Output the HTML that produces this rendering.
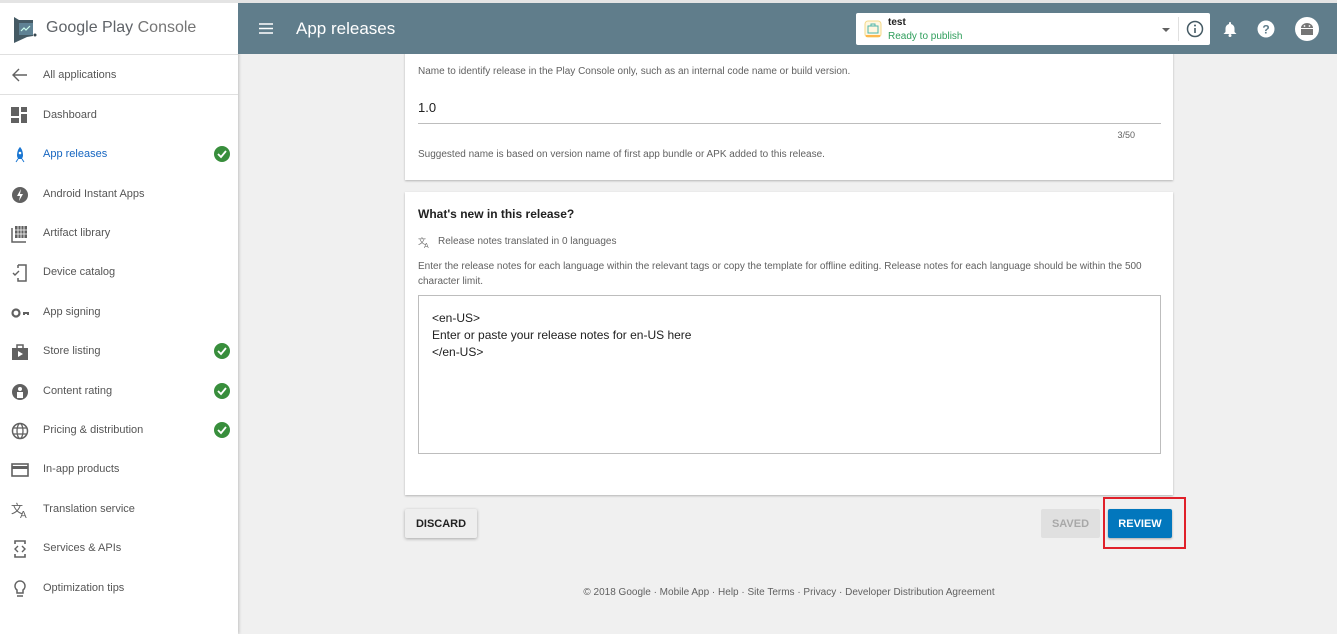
<!DOCTYPE html>
<html><head><meta charset="utf-8"><style>
*{box-sizing:border-box;margin:0;padding:0}
body{width:1337px;height:634px;overflow:hidden;background:#f0f0f0;font-family:"Liberation Sans",Arial,sans-serif;position:relative}
.topline{position:absolute;left:0;top:0;width:1337px;height:3px;background:#e4e4e4;z-index:6}
.side{position:absolute;left:0;top:3px;width:238px;height:631px;background:#fff;box-shadow:1px 0 3px rgba(0,0,0,.2);z-index:4}
.logo{height:52px;border-bottom:1px solid #e0e0e0;position:relative}
.logo span{position:absolute;left:46px;top:16px;font-size:16px;color:#5f6368}
.logo span b{font-weight:normal;color:#757575}
.allapps{height:40px;border-bottom:1px solid #e0e0e0;position:relative;font-size:11px;color:#555}
.nav{position:absolute;left:0;width:238px;height:20px;font-size:11px;color:#555;z-index:5}
.nav .t{position:absolute;left:43px;top:4px}
.nav svg{position:absolute;left:11px;top:2px}
.chk{position:absolute;left:214px;top:2px;width:16px;height:16px;border-radius:50%;background:#388e3c}
.hdr{position:absolute;left:238px;top:3px;width:1099px;height:51px;background:#607d8b;z-index:5}
.hdr .title{position:absolute;left:58px;top:16px;color:#fff;font-size:17px}
.sel{position:absolute;left:618px;top:10px;width:354px;height:32px;background:#fff;border-radius:2px}
.card{position:absolute;left:405px;width:768px;background:#fff;box-shadow:0 1px 2px rgba(0,0,0,.25)}
.s{font-size:10px;color:#616161;position:absolute}
.btn{position:absolute;font-size:11px;font-weight:bold;text-align:center;line-height:30px;border-radius:2px}
</style></head><body>
<div class="topline"></div>
<div class="side">
 <div class="logo">
  <svg style="position:absolute;left:13px;top:13px" width="26" height="28" viewBox="0 0 26 28"><path d="M1 1 L6 4 L20 4 L20 20 L14 21 L1 27 Z" fill="#455a64"/><rect x="6" y="7" width="14" height="12" fill="#5f8294"/><path d="M8 15 l3-3 2 2 4-4" stroke="#cfe" stroke-width="1.2" fill="none"/><circle cx="22" cy="19" r="1.5" fill="#37474f"/></svg>
  <span>Google Play <b>Console</b></span>
 </div>
 <div class="allapps"><svg style="position:absolute;left:12px;top:13px" width="16" height="14" viewBox="0 0 16 14"><path d="M15 7H2M7 1L1 7l6 6" stroke="#616161" stroke-width="1.4" fill="none"/></svg><span style="position:absolute;left:43px;top:14px">All applications</span></div>
</div>
<div class="nav" style="top:105px"><svg width="18" height="16" viewBox="0 0 18 16"><rect x="0" y="0" width="8" height="9" fill="#616161"/><rect x="10" y="0" width="6" height="5" fill="#616161"/><rect x="0" y="11" width="8" height="5" fill="#616161"/><rect x="10" y="7" width="6" height="9" fill="#616161"/></svg><span class="t">Dashboard</span></div>
<div class="nav" style="top:144px;color:#1565c0"><svg width="18" height="18" viewBox="0 0 18 18"><path d="M9 1c2 2 3 5 3 9l-1 3H7l-1-3c0-4 1-7 3-9z" fill="#1976d2"/><circle cx="9" cy="7" r="1.3" fill="#fff"/><path d="M5 16l2-3M13 16l-2-3" stroke="#1976d2"/></svg><span class="t">App releases</span><div class="chk"><svg style="left:3px;top:3px" width="10" height="10" viewBox="0 0 10 10"><path d="M1 5l3 3 5-6" stroke="#fff" stroke-width="1.8" fill="none"/></svg></div></div>
<div class="nav" style="top:184px"><svg width="18" height="18" viewBox="0 0 18 18"><circle cx="9" cy="9" r="8" fill="#616161"/><path d="M10 3L6 10h3l-1 5 4-7H9z" fill="#fff"/></svg><span class="t">Android Instant Apps</span></div>
<div class="nav" style="top:223px"><svg width="18" height="18" viewBox="0 0 18 18"><path d="M1 3v14h14" stroke="#616161" stroke-width="1.5" fill="none"/><rect x="4" y="1" width="12" height="12" fill="#616161"/><path d="M7 1v12M10 1v12M13 1v12M4 5h12M4 9h12" stroke="#fff" stroke-width=".8"/></svg><span class="t">Artifact library</span></div>
<div class="nav" style="top:262px"><svg width="18" height="18" viewBox="0 0 18 18"><path d="M7 1h8v16H7v-3M7 4V1" stroke="#616161" stroke-width="1.5" fill="none"/><path d="M2 9l2 2 4-4" stroke="#616161" stroke-width="1.4" fill="none"/></svg><span class="t">Device catalog</span></div>
<div class="nav" style="top:302px"><svg width="20" height="18" viewBox="0 0 20 18"><circle cx="5" cy="9" r="3.5" stroke="#616161" stroke-width="2.2" fill="none"/><path d="M8 8h10v3h-2v-1h-2v1h-2V8" fill="#616161"/></svg><span class="t">App signing</span></div>
<div class="nav" style="top:341px"><svg width="18" height="18" viewBox="0 0 18 18"><path d="M1 5h16v12H1z" fill="#616161"/><path d="M6 5V2h6v3" stroke="#616161" stroke-width="1.5" fill="none"/><path d="M7 8v6l5-3z" fill="#fff"/></svg><span class="t">Store listing</span><div class="chk"><svg style="left:3px;top:3px" width="10" height="10" viewBox="0 0 10 10"><path d="M1 5l3 3 5-6" stroke="#fff" stroke-width="1.8" fill="none"/></svg></div></div>
<div class="nav" style="top:381px"><svg width="18" height="18" viewBox="0 0 18 18"><circle cx="9" cy="9" r="8" fill="#616161"/><circle cx="9" cy="6" r="2" fill="#fff"/><rect x="6" y="9" width="6" height="6" fill="#fff"/></svg><span class="t">Content rating</span><div class="chk"><svg style="left:3px;top:3px" width="10" height="10" viewBox="0 0 10 10"><path d="M1 5l3 3 5-6" stroke="#fff" stroke-width="1.8" fill="none"/></svg></div></div>
<div class="nav" style="top:420px"><svg width="18" height="18" viewBox="0 0 18 18"><circle cx="9" cy="9" r="7.5" stroke="#616161" stroke-width="1.5" fill="none"/><ellipse cx="9" cy="9" rx="3" ry="7.5" stroke="#616161" stroke-width="1.3" fill="none"/><path d="M2 6h14M2 12h14" stroke="#616161" stroke-width="1.3"/></svg><span class="t">Pricing &amp; distribution</span><div class="chk"><svg style="left:3px;top:3px" width="10" height="10" viewBox="0 0 10 10"><path d="M1 5l3 3 5-6" stroke="#fff" stroke-width="1.8" fill="none"/></svg></div></div>
<div class="nav" style="top:459px"><svg width="18" height="18" viewBox="0 0 18 18"><rect x="1" y="3" width="16" height="12" stroke="#616161" stroke-width="1.6" fill="none"/><rect x="1" y="5" width="16" height="3" fill="#616161"/></svg><span class="t">In-app products</span></div>
<div class="nav" style="top:499px"><svg width="20" height="18" viewBox="0 0 20 18"><text x="0" y="12" font-size="12" fill="#616161" font-family="Liberation Sans">文</text><text x="9" y="17" font-size="10" fill="#616161" font-family="Liberation Sans">A</text></svg><span class="t">Translation service</span></div>
<div class="nav" style="top:538px"><svg width="18" height="18" viewBox="0 0 18 18"><path d="M4 4V1h10v3M4 14v3h10v-3" stroke="#616161" stroke-width="1.6" fill="none"/><path d="M7 6L4 9l3 3M11 6l3 3-3 3" stroke="#616161" stroke-width="1.4" fill="none"/></svg><span class="t">Services &amp; APIs</span></div>
<div class="nav" style="top:578px"><svg width="18" height="18" viewBox="0 0 18 18"><path d="M9 1a5 5 0 0 0-3 9v3h6v-3a5 5 0 0 0-3-9z" stroke="#616161" stroke-width="1.5" fill="none"/><path d="M6 16h6" stroke="#616161" stroke-width="1.5"/></svg><span class="t">Optimization tips</span></div>

<div class="hdr">
 <svg style="position:absolute;left:21px;top:20px" width="14" height="11" viewBox="0 0 14 11"><path d="M0 1h14M0 5.5h14M0 10h14" stroke="#fff" stroke-width="1.6"/></svg>
 <div class="title">App releases</div>
 <div class="sel">
  <svg style="position:absolute;left:8px;top:7px" width="18" height="18" viewBox="0 0 18 18"><rect x="1" y="1" width="16" height="16" rx="3" fill="#fff7e0" stroke="#f3d98a"/><rect x="4" y="6" width="10" height="7" fill="none" stroke="#4db6ac"/><path d="M7 6V4h4v2" stroke="#4db6ac" fill="none"/><path d="M2 16h14" stroke="#ffb74d" stroke-width="2"/></svg>
  <div style="position:absolute;left:32px;top:4px;font-size:10px;font-weight:bold;color:#212121">test</div>
  <div style="position:absolute;left:32px;top:18px;font-size:10px;color:#2e9e5b">Ready to publish</div>
  <div style="position:absolute;left:306px;top:15px;width:0;height:0;border-left:4px solid transparent;border-right:4px solid transparent;border-top:4px solid #616161"></div>
  <div style="position:absolute;left:322px;top:4px;width:1px;height:24px;background:#e0e0e0"></div>
  <svg style="position:absolute;left:330px;top:7px" width="18" height="18" viewBox="0 0 18 18"><circle cx="9" cy="9" r="7.5" stroke="#455a64" stroke-width="1.5" fill="none"/><path d="M9 8v5" stroke="#455a64" stroke-width="1.6"/><circle cx="9" cy="5.5" r="1" fill="#455a64"/></svg>
 </div>
 <svg style="position:absolute;left:985px;top:18px" width="14" height="16" viewBox="0 0 14 16"><path d="M7 1a1 1 0 0 1 1 1v1a4.5 4.5 0 0 1 3.5 4.5V11l2 2H.5l2-2V7.5A4.5 4.5 0 0 1 6 3V2a1 1 0 0 1 1-1z" fill="#fff"/><circle cx="7" cy="14.5" r="1.5" fill="#fff"/></svg>
 <svg style="position:absolute;left:1019px;top:17px" width="18" height="18" viewBox="0 0 18 18"><circle cx="9" cy="9" r="8.5" fill="#fff"/><text x="9" y="13.5" text-anchor="middle" font-size="12" font-weight="bold" fill="#607d8b" font-family="Liberation Sans">?</text></svg>
 <svg style="position:absolute;left:1057px;top:14px" width="24" height="24" viewBox="0 0 24 24"><circle cx="12" cy="12" r="12" fill="#fff"/><path d="M6 11a6 5 0 0 1 12 0z" fill="#757575"/><rect x="6" y="12" width="12" height="6" fill="#757575"/><circle cx="9.5" cy="9" r=".9" fill="#fff"/><circle cx="14.5" cy="9" r=".9" fill="#fff"/></svg>
</div>

<div class="card" style="top:40px;height:140px">
 <div class="s" style="left:13px;top:26px">Name to identify release in the Play Console only, such as an internal code name or build version.</div>
 <div style="position:absolute;left:13px;top:60px;font-size:13px;color:#212121">1.0</div>
 <div style="position:absolute;left:13px;top:83px;width:743px;height:1px;background:#bdbdbd"></div>
 <div class="s" style="right:38px;top:90px;font-size:9px">3/50</div>
 <div class="s" style="left:13px;top:109px">Suggested name is based on version name of first app bundle or APK added to this release.</div>
</div>
<div class="card" style="top:192px;height:303px">
 <div style="position:absolute;left:13px;top:15px;font-size:12px;font-weight:bold;color:#212121">What's new in this release?</div>
 <svg style="position:absolute;left:13px;top:44px" width="13" height="12" viewBox="0 0 13 12"><text x="0" y="8" font-size="8" fill="#757575" font-family="Liberation Sans">文</text><text x="6" y="12" font-size="7" fill="#757575" font-family="Liberation Sans">A</text></svg>
 <div class="s" style="left:33px;top:44px">Release notes translated in 0 languages</div>
 <div class="s" style="left:13px;top:67px;line-height:15px;width:745px">Enter the release notes for each language within the relevant tags or copy the template for offline editing. Release notes for each language should be within the 500 character limit.</div>
 <div style="position:absolute;left:13px;top:103px;width:743px;height:159px;border:1px solid #bdbdbd;padding:14px 13px;font-size:12px;line-height:17px;color:#212121">&lt;en-US&gt;<br>Enter or paste your release notes for en-US here<br>&lt;/en-US&gt;</div>
</div>
<div class="btn" style="left:405px;top:509px;width:72px;height:29px;background:#eeeeee;color:#212121;box-shadow:0 1px 3px rgba(0,0,0,.3)">DISCARD</div>
<div class="btn" style="left:1041px;top:509px;width:59px;height:29px;background:#e0e0e0;color:#a8a8a8">SAVED</div>
<div class="btn" style="left:1108px;top:509px;width:64px;height:29px;background:#0277bd;color:#fff;box-shadow:0 1px 2px rgba(0,0,0,.3)">REVIEW</div>
<div style="position:absolute;left:1103px;top:497px;width:83px;height:52px;border:2px solid #e0202a"></div>
<div style="position:absolute;left:405px;width:768px;top:587px;text-align:center;font-size:10px;color:#616161">© 2018 Google · Mobile App · Help · Site Terms · Privacy · Developer Distribution Agreement</div>
</body></html>
